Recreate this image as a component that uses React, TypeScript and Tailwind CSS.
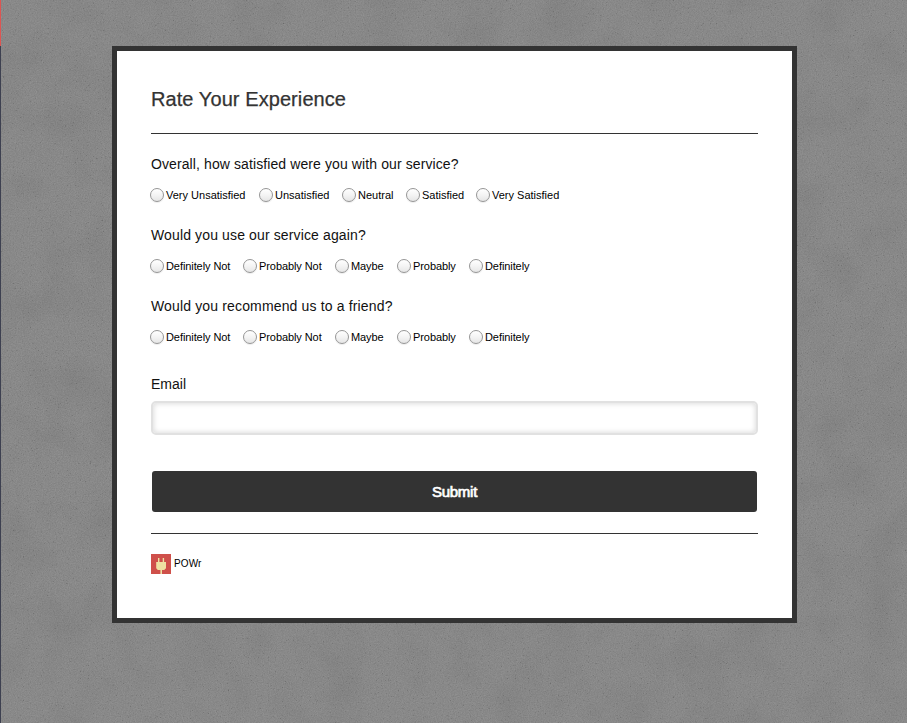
type Option = { label: string; width: string };
type QuestionProps = { title: string; tracking: string; options: Option[]; optionTracking: string };

const satisfaction: Option[] = [
  { label: 'Very Unsatisfied', width: 'w-[109px]' },
  { label: 'Unsatisfied', width: 'w-[83px]' },
  { label: 'Neutral', width: 'w-[64px]' },
  { label: 'Satisfied', width: 'w-[70px]' },
  { label: 'Very Satisfied', width: 'w-[90px]' },
];

const likelihood: Option[] = [
  { label: 'Definitely Not', width: 'w-[93px]' },
  { label: 'Probably Not', width: 'w-[92px]' },
  { label: 'Maybe', width: 'w-[62px]' },
  { label: 'Probably', width: 'w-[72px]' },
  { label: 'Definitely', width: 'w-[80px]' },
];

function Concrete() {
  return (
    <svg className="absolute inset-0 h-full w-full" aria-hidden="true">
      <filter id="grain" x="0" y="0" width="100%" height="100%" colorInterpolationFilters="sRGB">
        <feTurbulence type="fractalNoise" baseFrequency="0.85" numOctaves="2" seed="4" />
        <feColorMatrix values="0.1 0 0 0 0.487  0.1 0 0 0 0.487  0.1 0 0 0 0.487  0 0 0 0 1" />
      </filter>
      <filter id="speckle" x="0" y="0" width="100%" height="100%" colorInterpolationFilters="sRGB">
        <feTurbulence type="fractalNoise" baseFrequency="0.6" numOctaves="2" seed="21" />
        <feColorMatrix values="0 0 0 0 0.3  0 0 0 0 0.3  0 0 0 0 0.3  2 0 0 0 -1.34" />
      </filter>
      <filter id="mottle" x="0" y="0" width="100%" height="100%" colorInterpolationFilters="sRGB">
        <feTurbulence type="fractalNoise" baseFrequency="0.022" numOctaves="5" seed="9" />
        <feColorMatrix values="0 0 0 0 0.3  0 0 0 0 0.3  0 0 0 0 0.3  0.22 0 0 0 -0.09" />
      </filter>
      <rect width="100%" height="100%" filter="url(#grain)" />
      <rect width="100%" height="100%" filter="url(#speckle)" />
      <rect width="100%" height="100%" filter="url(#mottle)" />
    </svg>
  );
}

function Question({ title, tracking, options, optionTracking }: QuestionProps) {
  return (
    <fieldset className="h-[71px]">
      <legend className={`block h-[22px] whitespace-nowrap text-[14px] leading-[22px] ${tracking}`}>{title}</legend>
      <div className="-ml-px flex pt-[13px]">
        {options.map((o) => (
          <label
            key={o.label}
            className={`flex h-[14px] shrink-0 items-center whitespace-nowrap text-[11px] leading-[14px] text-black ${optionTracking} ${o.width}`}
          >
            <input
              type="radio"
              name={title}
              className="mr-[2px] size-[14px] shrink-0 appearance-none rounded-full border border-[#969696] bg-linear-to-b from-white via-[#f4f4f4] to-[#e6e6e6] shadow-[0_1px_1px_rgba(0,0,0,0.08)]"
            />
            {o.label}
          </label>
        ))}
      </div>
    </fieldset>
  );
}

function PlugLogo() {
  return (
    <svg className="size-5" viewBox="0 0 20 20" aria-hidden="true">
      <path fill="#cf504a" d="M0 0h20v20H0z" />
      <path fill="#eee2a2" d="M7 4h1.4v4h3.3V4h1.4v4H15v6.2L13.2 16H11v4H9.4v-4H6.8L5.2 14.3V8H7z" />
    </svg>
  );
}

export default function App() {
  return (
    <div className="relative flex h-[723px] w-[907px] overflow-hidden bg-[#888888] font-['Liberation_Sans',Arial,sans-serif] text-[#111111]">
      <Concrete />
      <div className="relative flex h-full w-px shrink-0 flex-col bg-[#3d4050]">
        <div className="h-[46px] bg-[#dc5552]" />
      </div>
      <main className="relative ml-[111px] mt-[46px] h-[577px] w-[685px] border-[5px] border-[#333333] bg-white px-[34px]">
        <h1 className="h-[83px] whitespace-nowrap border-b border-[#333333] pt-[34px] text-[20px] leading-[28px] tracking-[0.08px] text-[#333333] [-webkit-text-stroke:0.25px_#333333]">
          Rate Your Experience
        </h1>
        <form className="pt-[19px]">
          <Question title="Overall, how satisfied were you with our service?" tracking="tracking-[0.1px]" options={satisfaction} optionTracking="tracking-normal" />
          <Question title="Would you use our service again?" tracking="tracking-[0.13px]" options={likelihood} optionTracking="tracking-[-0.08px]" />
          <Question title="Would you recommend us to a friend?" tracking="tracking-[0.15px]" options={likelihood} optionTracking="tracking-[-0.08px]" />
          <label className="block pt-[7px] text-[14px] leading-[22px]">
            Email
            <input type="email" className="mt-[6px] block h-[34px] w-full rounded-[5px] border-2 border-[#e1e1e1] bg-white px-3 shadow-[inset_0_0_5px_1px_#dedede] outline-none" />
          </label>
          <button type="button" className="mx-px mt-[36px] block h-[41px] w-[605px] rounded-[3px] bg-[#333333] pt-px text-[15px] tracking-[-0.25px] text-white [-webkit-text-stroke:0.7px_white]">
            Submit
          </button>
        </form>
        <footer className="mt-[21px] flex items-center gap-[3px] border-t border-[#333333] pt-[20px] text-[10px] text-black">
          <PlugLogo />
          <span className="pb-[2px] tracking-[0.1px]">POWr</span>
        </footer>
      </main>
    </div>
  );
}
